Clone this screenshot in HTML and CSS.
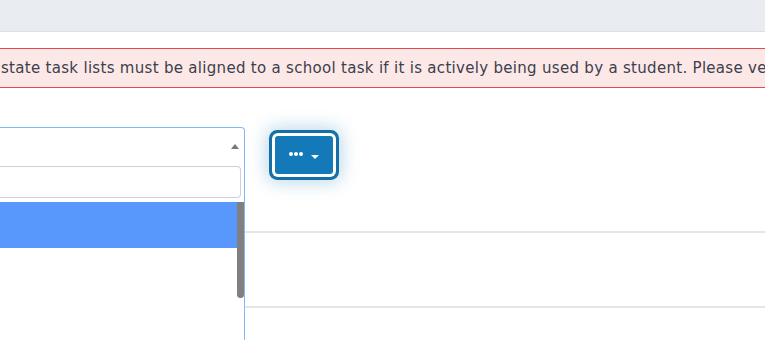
FILE: index.html
```html
<!DOCTYPE html>
<html lang="en">
<head>
  <meta charset="UTF-8" />
  <meta name="viewport" content="width=device-width, initial-scale=1.0"/>
  <title>Task Lists</title>
  <link rel="stylesheet" href="styles.css">
</head>
<body>
  <header class="topbar"></header>

  <main class="page">
    <div class="alert">
      state task lists must be aligned to a school task if it is actively being used by a student. Please verify
    </div>

    <div class="toolbar">
      <section class="select-col">
        <div class="select-box">
          <span class="select-arrow"></span>
        </div>
        <div class="select-dropdown">
          <div class="search-wrap">
            <input class="search-field" type="text" aria-label="Search" />
          </div>
          <div class="results">
            <ul class="options">
              <li class="highlighted"></li>
              <li></li>
              <li></li>
            </ul>
            <div class="scroll-track"><div class="scroll-thumb"></div></div>
          </div>
        </div>
      </section>

      <section class="main-col">
        <div class="actions">
          <button class="more-btn" type="button" aria-label="More actions">
            <svg width="14" height="4" viewBox="0 0 14 4">
              <circle cx="2" cy="2" r="2" fill="#fff"/>
              <circle cx="7" cy="2" r="2" fill="#fff"/>
              <circle cx="12" cy="2" r="2" fill="#fff"/>
            </svg>
            <span class="caret"></span>
          </button>
        </div>
        <div class="table-row"></div>
        <div class="table-row"></div>
      </section>
    </div>
  </main>
</body>
</html>
```

FILE: styles.css
```css
body {
  font-family: "DejaVu Sans", Arial, sans-serif;
  margin: 0;
  padding: 0;
  background-color: #fff;
  overflow: hidden;
}

.topbar {
  height: 31px;
  background-color: #e9ecf1;
  border-bottom: 1px solid #dcdfe4;
}

.page {
  padding-top: 16px;
}

.alert {
  margin-left: -10px;
  padding: 0 0 0 10px;
  height: 38px;
  line-height: 38px;
  white-space: nowrap;
  overflow: hidden;
  background-color: #fde8e8;
  border: 1px solid #e8474b;
  border-right: none;
  color: #3b404c;
  font-size: 15px;
  letter-spacing: 0.3px;
}

.toolbar {
  display: flex;
  margin-top: 39px;
}

.select-col {
  width: 265px;
  margin-left: -20px;
  flex-shrink: 0;
  height: 213px;
  display: flex;
  flex-direction: column;
  border: 1px solid #80b9f7;
  border-left: none;
  border-bottom: none;
  border-radius: 0 4px 0 0;
  box-sizing: border-box;
}

.select-box {
  height: 39px;
  position: relative;
}

.select-arrow {
  position: absolute;
  right: 5px;
  top: 16px;
  border-style: solid;
  border-width: 0 4px 5px 4px;
  border-color: transparent transparent #777 transparent;
}

.select-dropdown {
  flex: 1;
  display: flex;
  flex-direction: column;
}

.search-wrap {
  padding: 1px 3px 4px 0;
}

.search-field {
  display: block;
  width: 100%;
  height: 32px;
  box-sizing: border-box;
  border: 1px solid #cdd0d6;
  border-radius: 4px;
  border-left: none;
}

.results {
  flex: 1;
  display: flex;
}

.options {
  flex: 1;
  list-style: none;
  margin: 0;
  padding: 0;
}

.options li {
  height: 46px;
}

.options .highlighted {
  background-color: #5897fb;
}

.scroll-track {
  width: 7px;
}

.scroll-thumb {
  height: 96px;
  background-color: #808080;
  border-radius: 0 0 4px 4px;
}

.main-col {
  flex: 1;
}

.actions {
  height: 104px;
  padding: 9px 0 0 30px;
  box-sizing: border-box;
}

.more-btn {
  width: 58px;
  height: 38px;
  border: none;
  border-radius: 3px;
  background-color: #1479b8;
  display: flex;
  align-items: center;
  justify-content: center;
  gap: 8px;
  padding: 0;
  box-shadow: 0 0 0 3px #fff, 0 0 0 6px #166ea6, 0 0 18px 8px rgba(20, 121, 184, 0.3);
  cursor: pointer;
}

.more-btn svg {
  display: block;
  margin-top: -2px;
}

.caret {
  border-style: solid;
  border-width: 4px 4px 0 4px;
  border-color: #fff transparent transparent transparent;
  margin-top: 3px;
}

.table-row {
  height: 73px;
  border-top: 2px solid #e4e6ea;
}
```
